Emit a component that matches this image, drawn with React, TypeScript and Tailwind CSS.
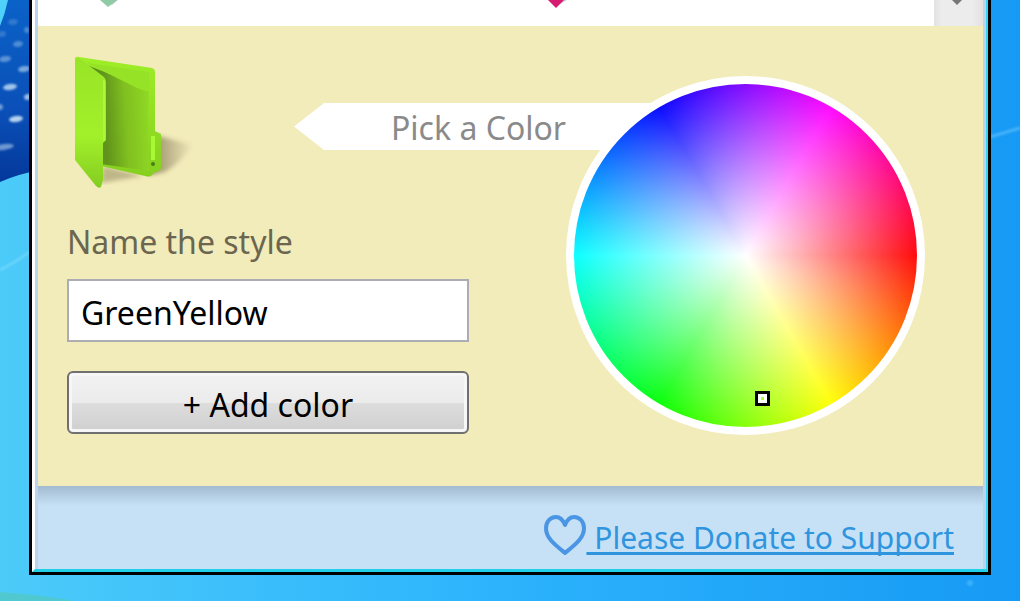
import { useState } from "react";

const dashes = [
  [13, 22, 5, 0.2],
  [2, 34, 4, 0.2],
  [27, 30, 3, 0.3],
  [18, 44, 5, 0.35],
  [5, 59, 6, 0.4],
  [24, 69, 6, 0.55],
  [10, 87, 7, 0.75],
  [28, 97, 4, 0.7],
  [0, 107, 3, 0.5],
  [16, 119, 7, 0.85],
  [4, 147, 10, 0.5],
];

function Wallpaper() {
  return (
    <svg
      className="absolute inset-0 h-full w-full"
      viewBox="0 0 1020 601"
      preserveAspectRatio="none"
      aria-hidden="true"
    >
      <defs>
        <linearGradient id="sky" x1="0" x2="1" y1="0" y2="0">
          <stop offset="0" stopColor="#4ccbf9" />
          <stop offset="0.45" stopColor="#2eb5fc" />
          <stop offset="1" stopColor="#169af5" />
        </linearGradient>
        <linearGradient id="fin" x1="0" x2="0" y1="0" y2="1">
          <stop offset="0" stopColor="#0a62c8" />
          <stop offset="0.6" stopColor="#0a50b8" />
          <stop offset="1" stopColor="#04389a" />
        </linearGradient>
        <filter id="glow">
          <feGaussianBlur stdDeviation="1" />
        </filter>
      </defs>
      <rect width="1020" height="601" fill="url(#sky)" />
      <path d="M0 0H40V170Q18 174 0 182Z" fill="url(#fin)" />
      <path d="M0 0H8Q5 14 0 26Z" fill="#4fd0f8" />
      <g filter="url(#glow)">
        {dashes.map(([x, y, r, opacity]) => (
          <ellipse
            key={y}
            cx={x}
            cy={y}
            rx={r}
            ry="3"
            fill="#d4ebfa"
            opacity={opacity}
            transform={`rotate(-8 ${x} ${y})`}
          />
        ))}
        <path d="M0 270Q16 262 32 250" stroke="#74d8fb" strokeWidth="2" fill="none" />
        <path d="M990 137L1020 128" stroke="#4ab4fa" strokeWidth="3" />
        <circle cx="970" cy="583" r="3" fill="#3cb2fb" />
      </g>
      <path d="M0 592Q40 595 76 601H0Z" fill="#50c8d0" />
    </svg>
  );
}

function FolderIcon() {
  return (
    <svg className="h-36 w-32 shrink-0" viewBox="0 0 128 144" aria-hidden="true">
      <defs>
        <linearGradient id="back" x1="0" x2="1" y1="0.5" y2="0.4">
          <stop offset="0.28" stopColor="#5f931b" />
          <stop offset="0.62" stopColor="#80bf20" />
          <stop offset="1" stopColor="#90d824" />
        </linearGradient>
        <linearGradient id="rim" x1="0" x2="0" y1="0" y2="1">
          <stop offset="0" stopColor="#9eee28" />
          <stop offset="1" stopColor="#86cf20" />
        </linearGradient>
        <linearGradient id="front" x1="0" x2="0" y1="0" y2="1">
          <stop offset="0" stopColor="#98e427" />
          <stop offset="0.6" stopColor="#a2f02a" />
          <stop offset="1" stopColor="#84cc22" />
        </linearGradient>
        <linearGradient id="cast" x1="0" x2="1" y1="0" y2="0">
          <stop offset="0" stopColor="#6a6040" stopOpacity="0.7" />
          <stop offset="1" stopColor="#6a6040" stopOpacity="0" />
        </linearGradient>
        <filter id="soft">
          <feGaussianBlur stdDeviation="2" />
        </filter>
      </defs>
      <path d="M84 82L126 93Q112 112 98 120L82 123Z" fill="url(#cast)" filter="url(#soft)" />
      <path d="M36 114L76 124L34 131Z" fill="#8d8358" opacity="0.5" filter="url(#soft)" />
      <path
        d="M8 6Q9 4 12 5L85 16Q88 17 88 20V79L94 82V116Q94 119 88 120L84 124Q82 125 78 124L34 114Z"
        fill="url(#rim)"
      />
      <path d="M20 13L48 24L82 36Q80 80 82 119L34 112Z" fill="url(#back)" />
      <path d="M20 11L82 20V40L70 36L46 24Z" fill="#96e226" />
      <path d="M84 84H88V108H84Z" fill="#a8f832" />
      <circle cx="86" cy="112" r="2" fill="#4f7d14" />
      <path
        d="M8 9Q8 5 12 6L37 25Q39 27 39 30V88L36 91V128L34 135Q32 137 29 134L8 108Z"
        fill="url(#front)"
      />
      <path d="M37 28V89" stroke="#aaf83a" strokeWidth="2" />
    </svg>
  );
}

function ColorWheel() {
  return (
    <div className="relative mt-[50px] size-[359px] shrink-0 rounded-full border-8 border-white bg-[radial-gradient(closest-side,#fff,transparent),conic-gradient(from_90deg,#f00,#ff0,#0f0,#0ff,#00f,#f0f,#f00)] bg-origin-border">
      <button
        type="button"
        aria-label="Selected color"
        className="absolute top-[307px] left-[181px] size-[15px] border-3 border-black bg-[#adff2f] p-0"
      >
        <span className="block size-full border-3 border-white" />
      </button>
    </div>
  );
}

function StyleForm() {
  const [name, setName] = useState("GreenYellow");

  return (
    <form
      className="flex w-[402px] shrink-0 flex-col"
      onSubmit={(event) => event.preventDefault()}
    >
      <div className="flex items-start justify-between pt-[26px]">
        <FolderIcon />
        <h2 className="mt-[51px] -mr-[190px] h-[47px] w-[365px] bg-white pl-[97px] text-[32px] leading-[50px] text-[#8a8a8a] [clip-path:polygon(0_50%,30px_0,100%_0,100%_100%,30px_100%)]">
          Pick a Color
        </h2>
      </div>
      <label htmlFor="style-name" className="mt-[22px] text-[32px] leading-[48px] text-[#6a6650]">
        Name the style
      </label>
      <input
        id="style-name"
        type="text"
        value={name}
        onChange={(event) => setName(event.target.value)}
        className="mt-[13px] h-[63px] w-full border-2 border-[#abadb3] bg-white px-3 pt-1 text-[32px] text-black outline-none"
      />
      <button
        type="submit"
        className="mt-[29px] h-[63px] rounded-md border-2 border-[#707070] bg-[linear-gradient(#f2f2f2,#ebebeb_50%,#dddddd_50%,#cfcfcf)] pt-1 text-[32px] text-black shadow-[inset_0_0_0_3px_#f6f6f6]"
      >
        + Add color
      </button>
    </form>
  );
}

function Footer() {
  return (
    <footer className="flex h-[83px] items-start justify-end bg-[#c6e1f6] bg-[linear-gradient(#a3bbd0,#c6e1f6_20px)] pt-7 pr-[29px]">
      <svg className="size-[42px]" viewBox="0 0 42 42" fill="none" aria-hidden="true">
        <path
          d="M21 11C19 6 16 3 12 3C6 3 2 8 2 14C2 24 10 30 21 39C32 30 40 24 40 14C40 8 36 3 30 3C26 3 23 6 21 11Z"
          stroke="#4a95e4"
          strokeWidth="4"
          strokeLinejoin="round"
        />
      </svg>
      <a
        href="#donate"
        className="text-[30px] leading-[48px] text-[#2f95de] underline decoration-3 underline-offset-3 [text-decoration-skip-ink:none]"
      >
        &nbsp;Please Donate to Support
      </a>
    </footer>
  );
}

export default function App() {
  return (
    <main className="relative min-h-screen overflow-hidden font-['Noto_Sans',sans-serif]">
      <Wallpaper />
      <div className="relative mx-[29px] border-x-3 border-b-3 border-black">
        <div className="border-r-2 border-b-3 border-l-3 border-r-[#35d5f5] border-b-[#20d0e8] border-l-white">
          <div className="border-r-3 border-l-3 border-[#bcd3ee]">
            <div className="flex h-[26px] justify-between bg-white">
              <svg className="h-full w-[600px]" viewBox="0 0 600 26" aria-hidden="true">
                <path d="M64 0H80L74 5Z" fill="#c9c9c9" />
                <path d="M62 0H79L70 7Z" fill="#90cba5" />
                <path d="M514 0H529L522 4Z" fill="#c9c9c9" />
                <path d="M510 0H526L518 8Z" fill="#d81b72" />
              </svg>
              <div className="w-[49px] bg-[linear-gradient(90deg,#e2e2e2,#ececec_16%,#ececec_80%,#e4e0e0)]">
                <svg className="h-full w-full" viewBox="0 0 49 26" aria-hidden="true">
                  <path d="M18 0H28L23 5Z" fill="#777" />
                </svg>
              </div>
            </div>
            <section className="flex h-[460px] justify-between bg-[#f2ebba] pr-[58px] pl-[29px]">
              <StyleForm />
              <ColorWheel />
            </section>
            <Footer />
          </div>
        </div>
      </div>
    </main>
  );
}
